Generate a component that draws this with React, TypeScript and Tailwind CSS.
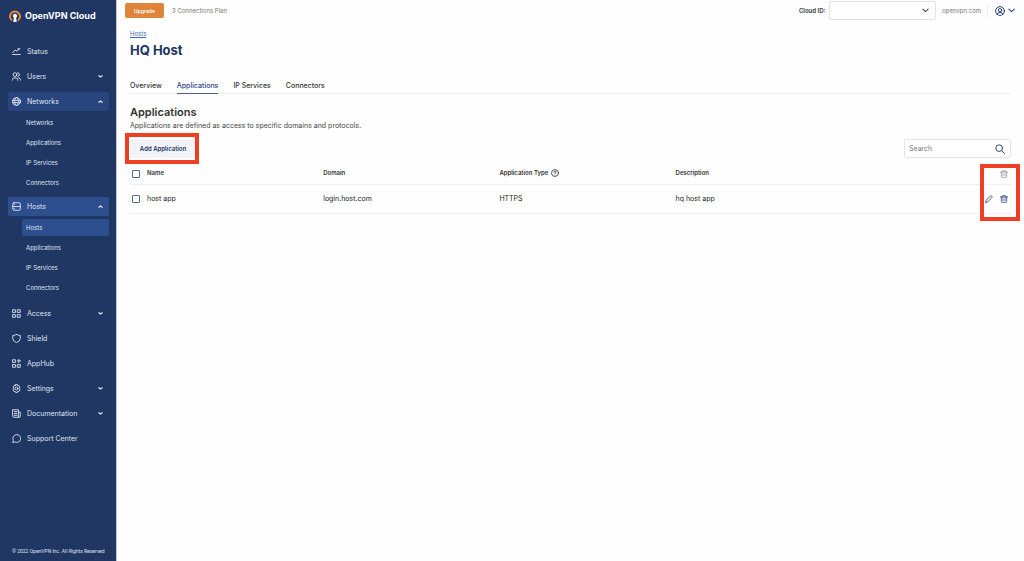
import { useState } from 'react';
import type { ReactNode } from 'react';
import clsx from 'clsx';

type NavItem = {
  label: string;
  icon: ReactNode;
  expandable?: boolean;
  children?: string[];
  current?: string;
};

function Icon({ children, className = 'size-[9px]' }: { children: ReactNode; className?: string }) {
  return (
    <svg viewBox="0 0 24 24" fill="none" stroke="currentColor" strokeWidth="2.4"
      strokeLinecap="round" strokeLinejoin="round" className={clsx('shrink-0', className)} aria-hidden="true">
      {children}
    </svg>
  );
}

const SUB_PAGES = ['Applications', 'IP Services', 'Connectors'];

const NAV: NavItem[] = [
  {
    label: 'Status',
    icon: <Icon><path d="M2 20h20M2 15l6-7 5 3 7-6M15 5h6" /></Icon>,
  },
  {
    label: 'Users',
    expandable: true,
    icon: (
      <Icon>
        <circle cx="8" cy="7" r="5" />
        <path d="M1 22v-2q0-4 4-4h6q4 0 4 4v2M15 2a5 5 0 0 1 0 10M18 16q5 0 5 4v2" />
      </Icon>
    ),
  },
  {
    label: 'Networks',
    expandable: true,
    icon: (
      <Icon>
        <circle cx="12" cy="12" r="10.500" />
        <path d="M1 9h22M1 15h22M12 1c-7 6-7 16 0 22M12 1c7 6 7 16 0 22" />
      </Icon>
    ),
    children: ['Networks', ...SUB_PAGES],
  },
  {
    label: 'Hosts',
    expandable: true,
    icon: <Icon><rect x="2" y="2" width="20" height="20" rx="3" /><path d="M2 12h20M6 7h1M6 17h1" /></Icon>,
    children: ['Hosts', ...SUB_PAGES],
    current: 'Hosts',
  },
  {
    label: 'Access',
    expandable: true,
    icon: (
      <Icon>
        <rect x="2" y="2" width="7" height="7" />
        <rect x="15" y="2" width="7" height="7" />
        <rect x="2" y="15" width="7" height="7" />
        <rect x="15" y="15" width="7" height="7" />
      </Icon>
    ),
  },
  {
    label: 'Shield',
    icon: <Icon><path d="M12 1q5 3 10 3v8q0 7-10 11Q2 19 2 12V4q5 0 10-3z" /></Icon>,
  },
  {
    label: 'AppHub',
    icon: (
      <Icon>
        <rect x="2" y="2" width="7" height="7" />
        <path d="M18 1v9M14 5h9" />
        <rect x="2" y="15" width="7" height="7" />
        <rect x="15" y="15" width="7" height="7" />
      </Icon>
    ),
  },
  {
    label: 'Settings',
    expandable: true,
    icon: (
      <Icon>
        <path d="M9.500 1.500h5l1 3 3-.5 3 4-2 3v2l2 3-3 4-3-.5-1 3h-5l-1-3-3 .5-3-4 2-3v-2l-2-3 3-4 3 .5z" />
        <circle cx="12" cy="12" r="4" />
      </Icon>
    ),
  },
  {
    label: 'Documentation',
    expandable: true,
    icon: (
      <Icon>
        <path d="M2 2h15v20H4q-2 0-2-2zM17 8h5v12q0 2-2 2h-3M6 7h7M6 12h7M6 17h7" />
      </Icon>
    ),
  },
  {
    label: 'Support Center',
    icon: <Icon><path d="M2 22l1.500-5A10.500 10.500 0 1 1 8 21.500z" /></Icon>,
  },
];

const APPLICATIONS = [
  { name: 'host app', domain: 'login.host.com', type: 'HTTPS', description: 'hq host app' },
];

const TABS = ['Overview', 'Applications', 'IP Services', 'Connectors'];

function Caret({ up }: { up?: boolean }) {
  return (
    <svg viewBox="0 0 10 6" className="w-[5px] h-[3px]" fill="none" stroke="currentColor" strokeWidth="2.6" aria-hidden="true">
      <path d={up ? 'M1 5l4-3 4 3' : 'M1 1l4 3 4-3'} />
    </svg>
  );
}

function Chevron() {
  return <Icon className="size-[7px]"><path d="M3 7l9 9 9-9" strokeWidth="3.600" /></Icon>;
}

function TrashIcon() {
  return (
    <Icon className="size-[8px]">
      <path d="M1 6h22M8 6V2h8v4M4 6v14q0 3 3 3h10q3 0 3-3V6M9 11v7M15 11v7" />
    </Icon>
  );
}

function Logo() {
  return (
    <svg viewBox="0 0 24 24" className="size-[12px] shrink-0" aria-hidden="true">
      <path d="M6 21A10 10 0 1 1 18 21" fill="none" stroke="#e8883a" strokeWidth="4" />
      <path d="M12 7.500a4.300 4.300 0 0 1 2.200 8L15.500 24h-7l1.300-8.500a4.300 4.300 0 0 1 2.200-8z" fill="#fff" />
    </svg>
  );
}

function Sidebar() {
  return (
    <aside className="w-[116px] shrink-0 flex flex-col bg-[#213763] text-[#dfe5f1]">
      <a href="#" className="flex items-center gap-1 h-8 pl-[9px] text-[9px] font-bold text-white whitespace-nowrap">
        <Logo />
        OpenVPN Cloud
      </a>
      <nav className="flex flex-col gap-[6px] mt-[10px] pl-2 pr-[7px]">
        {NAV.map(item => (
          <div key={item.label}>
            <button
              type="button"
              aria-expanded={item.expandable ? !!item.children : undefined}
              className={clsx(
                'w-full h-[19px] flex items-center gap-[6px] pl-1 pr-[6px] rounded-xs text-[7px] leading-[10px] text-left whitespace-nowrap',
                item.children && (item.current ? 'bg-[#2e4f8d]' : 'bg-[#28457d]')
              )}
            >
              {item.icon}
              <span className="flex-1">{item.label}</span>
              {item.expandable && <Caret up={!!item.children} />}
            </button>
            {item.children && (
              <ul className={clsx('flex flex-col gap-[3px] mt-[3px] pl-[14px]', item.current && 'pb-[2px]')}>
                {item.children.map(child => (
                  <li key={child}>
                    <a
                      href="#"
                      className={clsx(
                        'flex items-center h-[17px] pl-1 rounded-xs text-[6px] leading-[10px]',
                        child === item.current && 'bg-[#2e4f8d]'
                      )}
                    >
                      {child}
                    </a>
                  </li>
                ))}
              </ul>
            )}
          </div>
        ))}
      </nav>
      <p className="mt-auto pl-3 pb-[5px] font-[Roboto,sans-serif] text-[5px] leading-[10px] whitespace-nowrap">© 2022 OpenVPN Inc. All Rights Reserved</p>
    </aside>
  );
}

function TopBar() {
  return (
    <header className="flex items-center justify-between h-[21px] pl-[8px] pr-[9px] text-[6px] leading-[10px] whitespace-nowrap">
      <div className="flex items-center gap-2">
        <button type="button" className="w-[39px] h-[15px] rounded-xs bg-[#df853a] text-[5px] font-semibold text-white">Upgrade</button>
        <span className="text-[#777]">3 Connections Plan</span>
      </div>
      <div className="flex items-center">
        <label htmlFor="cloud-id" className="mr-1 font-semibold text-[#333]">Cloud ID:</label>
        <div className="relative">
          <select id="cloud-id" className="block appearance-none w-[107px] h-[19px] rounded-xs border border-[#e2e3e6] bg-white">
            <option></option>
          </select>
          <span className="absolute right-[7px] top-[6px] text-[#2c457c] pointer-events-none"><Chevron /></span>
        </div>
        <span className="ml-1 text-[#777]">.openvpn.com</span>
        <button type="button" aria-label="Account" className="ml-[6px] pl-[7px] h-[14px] flex items-center gap-[3px] border-l border-[#f0f0f2] text-[#2c457c]">
          <Icon className="size-[10px]">
            <circle cx="12" cy="12" r="10.500" />
            <circle cx="12" cy="10" r="4" />
            <path d="M5 20q1-5 7-5t7 5" />
          </Icon>
          <Chevron />
        </button>
      </div>
    </header>
  );
}

function Checkbox({ label, checked, onChange }: { label: string; checked: boolean; onChange: () => void }) {
  return (
    <input
      type="checkbox"
      aria-label={label}
      checked={checked}
      onChange={onChange}
      className="block appearance-none size-[8px] ml-[2px] rounded-[1px] border border-[#566890] bg-white checked:bg-[#213763]"
    />
  );
}

function ApplicationsTable({ query }: { query: string }) {
  const [selected, setSelected] = useState<string[]>([]);
  const rows = APPLICATIONS.filter(a => a.name.includes(query));
  const allSelected = rows.length > 0 && selected.length === rows.length;

  const toggle = (name: string) =>
    setSelected(prev => (prev.includes(name) ? prev.filter(n => n !== name) : [...prev, name]));

  return (
    <div className="relative">
      <table className="w-full table-fixed text-left text-[#333]">
        <colgroup>
          <col className="w-[17px]" />
          <col className="w-1/5" />
          <col className="w-1/5" />
          <col className="w-1/5" />
          <col className="w-1/5" />
          <col />
        </colgroup>
        <thead className="text-[6px] leading-[10px]">
          <tr className="h-[22px] border-b border-[#f0f0f2]">
            <th className="pt-[2px]"><Checkbox label="Select all" checked={allSelected} onChange={() => setSelected(allSelected ? [] : rows.map(r => r.name))} /></th>
            <th className="font-semibold">Name</th>
            <th className="font-semibold">Domain</th>
            <th className="font-semibold">
              <span className="flex items-center gap-[3px]">
                Application Type
                <Icon className="size-[8px]">
                  <circle cx="12" cy="12" r="10.500" />
                  <path d="M8.500 9.500q0-3.500 3.500-3.500t3.500 3q0 2-3.500 4v1M12 18v.5" />
                </Icon>
              </span>
            </th>
            <th className="font-semibold">Description</th>
            <th className="pt-[3px]">
              <button type="button" aria-label="Delete selected" className="block ml-auto mr-[3px] text-[#999]"><TrashIcon /></button>
            </th>
          </tr>
        </thead>
        <tbody className="text-[7px] leading-[10px] text-[#222]">
          {rows.map(row => (
            <tr key={row.name} className="h-[29px] border-b border-[#f0f0f2]">
              <td><Checkbox label={`Select ${row.name}`} checked={selected.includes(row.name)} onChange={() => toggle(row.name)} /></td>
              <td>{row.name}</td>
              <td>{row.domain}</td>
              <td>{row.type}</td>
              <td>{row.description}</td>
              <td>
                <div className="flex justify-end gap-[7px] pr-[3px] text-[#2c457c]">
                  <button type="button" aria-label={`Edit ${row.name}`}>
                    <Icon className="size-[8px]"><path d="M2 22l2-7L16 3q2-2 4 0t1 4L9 20z" /></Icon>
                  </button>
                  <button type="button" aria-label={`Delete ${row.name}`}><TrashIcon /></button>
                </div>
              </td>
            </tr>
          ))}
        </tbody>
      </table>
      {/* Highlight around the row actions */}
      <div className="absolute -right-[9px] top-[2px] w-10 h-[57px] border-4 border-[#ec3f24] pointer-events-none" />
    </div>
  );
}

export default function App() {
  const [tab, setTab] = useState('Applications');
  const [query, setQuery] = useState('');

  return (
    <div className="min-h-screen flex bg-[#fefefe] font-[Inter,sans-serif]">
      <Sidebar />
      <div className="flex-1 min-w-0 border-l border-[#bcc5d9]">
        <TopBar />
        <main className="px-[13px] pt-2">
          <a href="#" className="block w-fit text-[6px] leading-[10px] text-[#4468b0] underline">Hosts</a>
          <h1 className="mt-[3px] text-[13px] leading-[16px] font-bold text-[#213763]">HQ Host</h1>

          <div role="tablist" className="flex gap-[15px] mt-[21px] border-b border-[#f0f0f2]">
            {TABS.map(name => (
              <button
                key={name}
                type="button"
                role="tab"
                aria-selected={tab === name}
                onClick={() => setTab(name)}
                className={clsx(
                  'h-[15px] pb-px -mb-px border-b text-[7px] leading-[10px] font-medium',
                  tab === name ? 'border-[#4a5f90] text-[#2c457c]' : 'border-transparent text-[#333]'
                )}
              >
                {name}
              </button>
            ))}
          </div>

          <h2 className="mt-[10px] text-[11px] leading-[16px] font-semibold text-[#333]">Applications</h2>
          <p className="mt-px text-[7px] leading-[10px] text-[#444]">Applications are defined as access to specific domains and protocols.</p>

          <div className="flex items-center justify-between mt-2 mb-1">
            <div className="relative">
              <button type="button" className="block w-[66px] h-[19px] rounded-xs bg-[#f1f3f9] text-[6px] leading-[10px] font-semibold text-[#213763] whitespace-nowrap">
                Add Application
              </button>
              {/* Highlight around the add button */}
              <div className="absolute -left-[5px] -top-[6px] w-[74px] h-[31px] border-4 border-[#ec3f24] pointer-events-none" />
            </div>
            <div className="flex items-center w-[107px] h-[19px] pl-1 pr-[5px] rounded-xs border border-[#e2e3e6] bg-white">
              <input
                type="text"
                aria-label="Search"
                placeholder="Search"
                value={query}
                onChange={e => setQuery(e.target.value)}
                className="flex-1 min-w-0 text-[7px] leading-[10px] outline-none placeholder:text-[#777]"
              />
              <Icon className="size-[10px] text-[#2c457c]"><circle cx="10" cy="10" r="8" /><path d="M16 16l7 7" /></Icon>
            </div>
          </div>

          <ApplicationsTable query={query} />
        </main>
      </div>
    </div>
  );
}
